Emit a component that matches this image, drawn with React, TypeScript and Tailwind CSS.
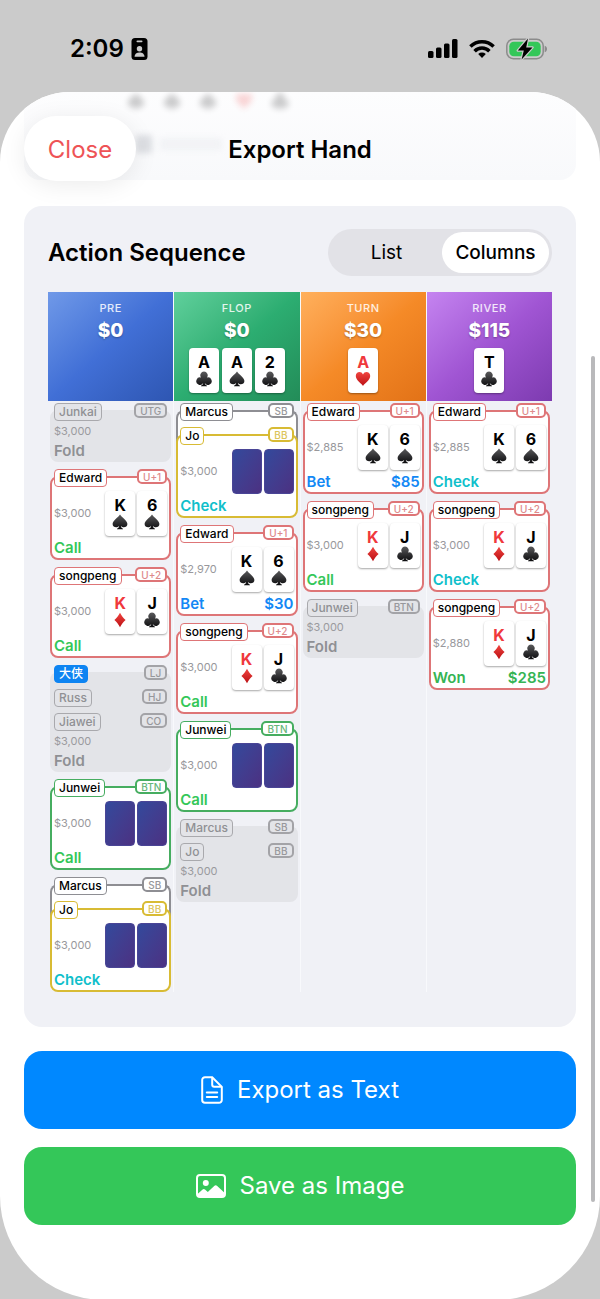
import React, { useState } from "react";
import clsx from "clsx";

type Suit = "club" | "spade" | "heart" | "diamond";
type Tone = "red" | "green" | "yellow" | "gray";
type ActionKind = "Fold" | "Call" | "Check" | "Bet" | "Won";

interface PlayingCard {
  rank: string;
  suit: Suit;
}

interface Seat {
  name: string;
  position: string;
  tone: Tone;
  hero?: boolean;
}

interface Step {
  seats: Seat[];
  stack: string;
  action: ActionKind;
  amount?: string;
  cards?: PlayingCard[];
}

interface Street {
  name: string;
  pot: string;
  header: string;
  board: PlayingCard[];
  steps: Step[];
}

const edwardCards: PlayingCard[] = [
  { rank: "K", suit: "spade" },
  { rank: "6", suit: "spade" },
];
const songpengCards: PlayingCard[] = [
  { rank: "K", suit: "diamond" },
  { rank: "J", suit: "club" },
];

const edward: Seat = { name: "Edward", position: "U+1", tone: "red" };
const songpeng: Seat = { name: "songpeng", position: "U+2", tone: "red" };
const junwei: Seat = { name: "Junwei", position: "BTN", tone: "green" };
const marcus: Seat = { name: "Marcus", position: "SB", tone: "gray" };
const jo: Seat = { name: "Jo", position: "BB", tone: "yellow" };

const streets: Street[] = [
  {
    name: "PRE",
    pot: "$0",
    header: "from-[#7099e8] via-[#416fd6] to-[#2e56b2]",
    board: [],
    steps: [
      { seats: [{ name: "Junkai", position: "UTG", tone: "gray" }], stack: "$3,000", action: "Fold" },
      { seats: [edward], stack: "$3,000", action: "Call", cards: edwardCards },
      { seats: [songpeng], stack: "$3,000", action: "Call", cards: songpengCards },
      {
        seats: [
          { name: "大侠", position: "LJ", tone: "gray", hero: true },
          { name: "Russ", position: "HJ", tone: "gray" },
          { name: "Jiawei", position: "CO", tone: "gray" },
        ],
        stack: "$3,000",
        action: "Fold",
      },
      { seats: [junwei], stack: "$3,000", action: "Call" },
      { seats: [marcus, jo], stack: "$3,000", action: "Check" },
    ],
  },
  {
    name: "FLOP",
    pot: "$0",
    header: "from-[#5fd09c] via-[#2cad71] to-[#238c58]",
    board: [
      { rank: "A", suit: "club" },
      { rank: "A", suit: "spade" },
      { rank: "2", suit: "club" },
    ],
    steps: [
      { seats: [marcus, jo], stack: "$3,000", action: "Check" },
      { seats: [edward], stack: "$2,970", action: "Bet", amount: "$30", cards: edwardCards },
      { seats: [songpeng], stack: "$3,000", action: "Call", cards: songpengCards },
      { seats: [junwei], stack: "$3,000", action: "Call" },
      { seats: [marcus, jo], stack: "$3,000", action: "Fold" },
    ],
  },
  {
    name: "TURN",
    pot: "$30",
    header: "from-[#ffb05c] via-[#f58a27] to-[#e27217]",
    board: [{ rank: "A", suit: "heart" }],
    steps: [
      { seats: [edward], stack: "$2,885", action: "Bet", amount: "$85", cards: edwardCards },
      { seats: [songpeng], stack: "$3,000", action: "Call", cards: songpengCards },
      { seats: [junwei], stack: "$3,000", action: "Fold" },
    ],
  },
  {
    name: "RIVER",
    pot: "$115",
    header: "from-[#c584f0] via-[#a055d3] to-[#7d3bb0]",
    board: [{ rank: "T", suit: "club" }],
    steps: [
      { seats: [edward], stack: "$2,885", action: "Check", cards: edwardCards },
      { seats: [songpeng], stack: "$3,000", action: "Check", cards: songpengCards },
      { seats: [songpeng], stack: "$2,880", action: "Won", amount: "$285", cards: songpengCards },
    ],
  },
];

const suitPaths: Record<Suit, string> = {
  club: "M8 .6a3.7 3.7 0 0 0-2.9 6A3.7 3.7 0 1 0 7.2 12c-.2 1.400-1 2.300-2.200 2.700v.5h6v-.5C9.800 14.300 9 13.400 8.800 12a3.700 3.700 0 1 0 2.100-5.400A3.700 3.700 0 0 0 8 .6Z",
  spade:
    "M8 .6C6.400 3.600.6 6.400.6 10.100c0 3.300 4.400 4.400 6.500 1.900-.2 1.300-.9 2.200-2.100 2.700v.5h6v-.5c-1.200-.5-1.900-1.400-2.100-2.700 2.100 2.500 6.500 1.400 6.500-1.900C15.400 6.400 9.600 3.600 8 .6Z",
  heart: "M8 15C6.800 12.700.8 9.400.8 5c0-4.500 5.700-5.300 7.200-1.400C9.500-.3 15.200.5 15.200 5c0 4.400-6 7.700-7.200 10Z",
  diamond: "M8 .8c1.400 2.800 3.400 5.200 5.600 7.200C11.400 10 9.400 12.400 8 15.200 6.600 12.400 4.600 10 2.400 8 4.600 6 6.600 3.600 8 .8Z",
};

const isRed = (suit: Suit) => suit === "heart" || suit === "diamond";

const SuitIcon = ({ suit }: { suit: Suit }) => (
  <svg viewBox="0 0 16 16" className="w-4 h-4" aria-hidden="true">
    <path d={suitPaths[suit]} fill={isRed(suit) ? "url(#suit-red)" : "url(#suit-black)"} />
  </svg>
);

const CardFace = ({ card }: { card: PlayingCard }) => (
  <div className="w-[30px] h-[45px] shrink-0 rounded-[4px] bg-white shadow-[0_1px_2px_rgba(0,0,0,0.35)] flex flex-col items-center justify-center">
    <span
      className={clsx("text-base leading-[17px] font-bold", isRed(card.suit) ? "text-[#f0383c]" : "text-black")}
    >
      {card.rank}
    </span>
    <SuitIcon suit={card.suit} />
  </div>
);

const CardBack = () => (
  <div className="w-[30px] h-[45px] shrink-0 rounded-[4px] bg-linear-to-br from-[#32499c] to-[#4b3182] border border-[#4a4596]" />
);

const toneBorder: Record<Tone, string> = {
  red: "border-[#de7577]",
  green: "border-[#46ad60]",
  yellow: "border-[#d8bb34]",
  gray: "border-[#8e8e93]",
};

const toneText: Record<Tone, string> = {
  red: "text-[#de8a8c]",
  green: "text-[#67b67b]",
  yellow: "text-[#dcc45a]",
  gray: "text-[#97979b]",
};

const actionText: Record<ActionKind, string> = {
  Fold: "text-[#8f9094]",
  Call: "text-[#34c759]",
  Check: "text-[#10bfcb]",
  Bet: "text-[#1388f5]",
  Won: "text-[#35b454]",
};

const SeatRow = ({ seat, folded }: { seat: Seat; folded: boolean }) => (
  <div className="-mt-[9px] h-[18px] flex items-start justify-between">
    <span
      className={clsx(
        "h-[18px] px-1 flex items-center rounded-[4px] border text-xs leading-none font-medium",
        seat.hero && "bg-[#0d84f2] border-[#0d84f2] text-white",
        !seat.hero && folded && "bg-[#e3e4e8] border-[#a9a9ad] text-[#8f9094]",
        !seat.hero && !folded && ["bg-white text-black", toneBorder[seat.tone]],
      )}
    >
      {seat.name}
    </span>
    <span
      className={clsx(
        "h-[15px] px-1 flex items-center rounded-[5px] border-2 text-[10px] leading-none font-medium",
        folded
          ? "bg-[#e3e4e8] border-[#a3a3a7] text-[#97979b]"
          : ["bg-white", toneBorder[seat.tone], toneText[seat.tone]],
      )}
    >
      {seat.position}
    </span>
  </div>
);

const StepCard = ({ step }: { step: Step }) => {
  const folded = step.action === "Fold";
  const last = step.seats[step.seats.length - 1];
  const cards = step.cards;

  const frame = (seat: Seat) =>
    clsx(
      "border-2 rounded-[8px] px-[2px]",
      folded ? "border-[#e3e4e8] bg-[#e3e4e8]" : [toneBorder[seat.tone], "bg-white"],
    );

  return (
    <li className="pt-[7px]">
      {step.seats.slice(0, -1).map((seat) => (
        <div key={seat.name} className={clsx(frame(seat), "h-8 -mb-2 border-b-0 rounded-b-none")}>
          <SeatRow seat={seat} folded={folded} />
        </div>
      ))}
      <div className={frame(last)}>
        <SeatRow seat={last} folded={folded} />
        {folded ? (
          <div className="h-5 flex items-center text-[11px] text-[#9a9a9e]">{step.stack}</div>
        ) : (
          <div className="mt-1 flex items-center justify-between">
            <span className="text-[11px] text-[#98989c]">{step.stack}</span>
            <div className="flex gap-[2px]">
              {cards ? (
                cards.map((c) => <CardFace key={c.rank} card={c} />)
              ) : (
                <>
                  <CardBack />
                  <CardBack />
                </>
              )}
            </div>
          </div>
        )}
        <div
          className={clsx(
            "flex items-center justify-between text-[15px] leading-none font-semibold",
            folded ? "h-[19px]" : "h-[22px]",
            actionText[step.action],
          )}
        >
          <span>{step.action}</span>
          {step.amount && <span>{step.amount}</span>}
        </div>
      </div>
    </li>
  );
};

const StreetColumn = ({ street }: { street: Street }) => (
  <section className="flex flex-col bg-[#f0f1f6]">
    <div className={clsx("h-[109px] pt-2 flex flex-col items-center bg-linear-to-br text-white", street.header)}>
      <h3 className="text-[11px] leading-4 font-medium tracking-wider text-white/85">{street.name}</h3>
      <div className="text-[19px] leading-[30px] font-extrabold [text-shadow:0_1px_2px_rgba(0,0,0,0.3)]">
        {street.pot}
      </div>
      <div className="mt-[2px] flex gap-[3px]">
        {street.board.map((c) => (
          <CardFace key={c.rank + c.suit} card={c} />
        ))}
      </div>
    </div>
    <ul className="pt-[2px] px-[2px] flex flex-col gap-[7px]">
      {street.steps.map((step, i) => (
        <StepCard key={i} step={step} />
      ))}
    </ul>
  </section>
);

const StatusBar = () => (
  <div className="h-[92px] pl-[70px] pr-[53px] pt-[5px] flex items-center justify-between text-black">
    <div className="flex items-center gap-[7px]">
      <span className="text-2xl font-semibold">2:09</span>
      <svg viewBox="0 0 17 22" className="w-[17px] h-[22px]" aria-hidden="true">
        <rect x="0.500" width="16" height="22" rx="3.500" fill="#000" />
        <rect x="5.500" y="2.400" width="6" height="1.800" rx="0.900" fill="#cbcbcb" />
        <circle cx="8.500" cy="10.800" r="2.700" fill="#cbcbcb" />
        <path d="M3.500 18.800c0-3 2.200-4.400 5-4.400s5 1.400 5 4.400Z" fill="#cbcbcb" />
      </svg>
    </div>
    <div className="flex items-center gap-[11px]">
      <svg viewBox="0 0 30 19" className="w-[30px] h-[19px]" aria-hidden="true">
        <rect x="0" y="12" width="5.500" height="7" rx="1.500" />
        <rect x="8" y="8.500" width="5.500" height="10.500" rx="1.500" />
        <rect x="16" y="4.500" width="5.500" height="14.500" rx="1.500" />
        <rect x="24" y="0" width="5.500" height="19" rx="1.500" />
      </svg>
      <svg viewBox="0 0 26 19" className="w-[26px] h-[19px]" aria-hidden="true">
        <g fill="none" stroke="#000" strokeWidth="3.500">
          <path d="M1.400 7.400a16.500 16.500 0 0 1 23.200 0" />
          <path d="M5.600 12.200a10.400 10.400 0 0 1 14.800 0" />
        </g>
        <path d="M9.200 15.100a5.600 5.600 0 0 1 7.600 0L13 18.900Z" />
      </svg>
      <svg viewBox="0 0 41 22" className="w-[41px] h-[22px]" aria-hidden="true">
        <rect x="0.800" y="1.300" width="36.400" height="19.400" rx="6.500" fill="none" stroke="#8b8b8b" strokeWidth="1.500" />
        <path d="M38.700 7.800c1.500.5 2.300 1.700 2.300 3.200s-.8 2.700-2.300 3.200Z" fill="#8b8b8b" />
        <rect x="3.300" y="3.700" width="31.400" height="14.600" rx="4.500" fill="#34c759" />
        <path
          d="M22 .5 11.800 12.500h6L15.600 21.500 26.500 9.500h-6.300Z"
          fill="#000"
          stroke="#cbcbcb"
          strokeWidth="2.400"
          strokeLinejoin="round"
          paintOrder="stroke"
        />
      </svg>
    </div>
  </div>
);

// content scrolled under the translucent navigation bar
const ScrolledContent = () => (
  <div
    className="absolute inset-x-6 top-0 h-[88px] rounded-b-2xl bg-linear-to-b from-[#fdfdfe] to-[#f8f9fb]"
    aria-hidden="true"
  >
    <div className="pl-[103px] flex gap-[18px] opacity-20 blur-[3px]">
      {(["spade", "spade", "spade", "heart", "club"] as Suit[]).map((suit, i) => (
        <svg key={i} viewBox="0 0 16 16" className="w-[18px] h-[18px]">
          <path d={suitPaths[suit]} fill={isRed(suit) ? "#e33" : "#000"} />
        </svg>
      ))}
    </div>
    <div className="pl-[112px] pt-[25px] flex items-center gap-2 opacity-20 blur-[3px]">
      <div className="w-4 h-[18px] bg-gray-500" />
      <div className="w-[62px] h-3 bg-gray-300" />
    </div>
  </div>
);

const ExportButton = ({
  icon,
  label,
  className,
}: {
  icon: React.ReactNode;
  label: string;
  className: string;
}) => (
  <button
    type="button"
    className={clsx(
      "w-full h-[78px] rounded-[18px] flex items-center justify-center gap-3.5 text-2xl text-white",
      className,
    )}
  >
    {icon}
    {label}
  </button>
);

const DocIcon = () => (
  <svg viewBox="0 0 22 28" className="w-[22px] h-7" fill="none" stroke="#fff" strokeWidth="2" aria-hidden="true">
    <path d="M4 1.200h7.200L20.800 10.800V24a2.800 2.800 0 0 1-2.800 2.800H4A2.800 2.800 0 0 1 1.200 24V4A2.800 2.800 0 0 1 4 1.200Z" />
    <path d="M11.200 1.500v7.300a2 2 0 0 0 2 2h7.400" />
    <path d="M5.800 16.500h10.400M5.800 21h10.400" strokeLinecap="round" />
  </svg>
);

const PhotoIcon = () => (
  <svg viewBox="0 0 30 24" className="w-[30px] h-6" aria-hidden="true">
    <rect x="1" y="1" width="28" height="22" rx="3" fill="none" stroke="#fff" strokeWidth="2" />
    <circle cx="9.800" cy="9" r="3" fill="#fff" />
    <path
      d="M1 20.500 6.600 15.600q1.200-1 2.400 0l2.800 2.400 6.400-6q1.500-1.300 3 0L29 19.200V20a3 3 0 0 1-3 3H4a3 3 0 0 1-3-2.500Z"
      fill="#fff"
    />
  </svg>
);

export default function App() {
  const [view, setView] = useState("Columns");

  return (
    <div className="min-h-screen flex flex-col bg-[#cbcbcb] font-['Inter','Noto_Sans_CJK_SC',sans-serif] text-black">
      <svg className="absolute w-0 h-0" aria-hidden="true">
        <defs>
          <linearGradient id="suit-black" x1="0" y1="0" x2="0" y2="1">
            <stop offset="0" stopColor="#5a5a5c" />
            <stop offset="1" stopColor="#0c0c0e" />
          </linearGradient>
          <linearGradient id="suit-red" x1="0" y1="0" x2="0" y2="1">
            <stop offset="0" stopColor="#f0443f" />
            <stop offset="1" stopColor="#bb1014" />
          </linearGradient>
        </defs>
      </svg>

      <StatusBar />

      <main className="relative flex-1 overflow-hidden bg-white rounded-t-[70px] rounded-b-[104px] pb-[75px]">
        <ScrolledContent />

        <header className="relative px-6 pt-6 pb-[25px] grid grid-cols-[1fr_auto_1fr] items-center">
          <button
            type="button"
            className="w-28 h-[65px] pt-[2px] rounded-full bg-white text-2xl text-[#ee5356] shadow-[0_4px_24px_rgba(0,0,0,0.08)]"
          >
            Close
          </button>
          <h1 className="pt-[2px] text-2xl font-semibold">Export Hand</h1>
        </header>

        <div className="px-6">
          <section className="rounded-[18px] bg-[#f0f1f6] px-6 pt-[23px] pb-[35px]">
            <div className="mb-4 flex items-center justify-between">
              <h2 className="text-2xl font-semibold">Action Sequence</h2>
              <div className="w-56 h-[47px] p-[3px] flex rounded-full bg-[#e2e2e7]">
                {["List", "Columns"].map((option) => (
                  <button
                    key={option}
                    type="button"
                    aria-pressed={view === option}
                    onClick={() => setView(option)}
                    className={clsx(
                      "pt-px rounded-full text-[19px]",
                      option === "List" ? "flex-1" : "w-[107px]",
                      view === option ? "bg-white font-medium" : "font-normal",
                    )}
                  >
                    {option}
                  </button>
                ))}
              </div>
            </div>

            <div className="grid grid-cols-4 gap-px bg-[#f8f9fc]">
              {streets.map((street) => (
                <StreetColumn key={street.name} street={street} />
              ))}
            </div>
          </section>

          <div className="mt-6 flex flex-col gap-[18px]">
            <ExportButton icon={<DocIcon />} label="Export as Text" className="bg-[#0088ff]" />
            <ExportButton icon={<PhotoIcon />} label="Save as Image" className="bg-[#34c759]" />
          </div>
        </div>

        <div className="absolute right-[5px] top-[264px] bottom-[98px] w-1 rounded-full bg-[#b9b9bb]" />
      </main>
    </div>
  );
}
